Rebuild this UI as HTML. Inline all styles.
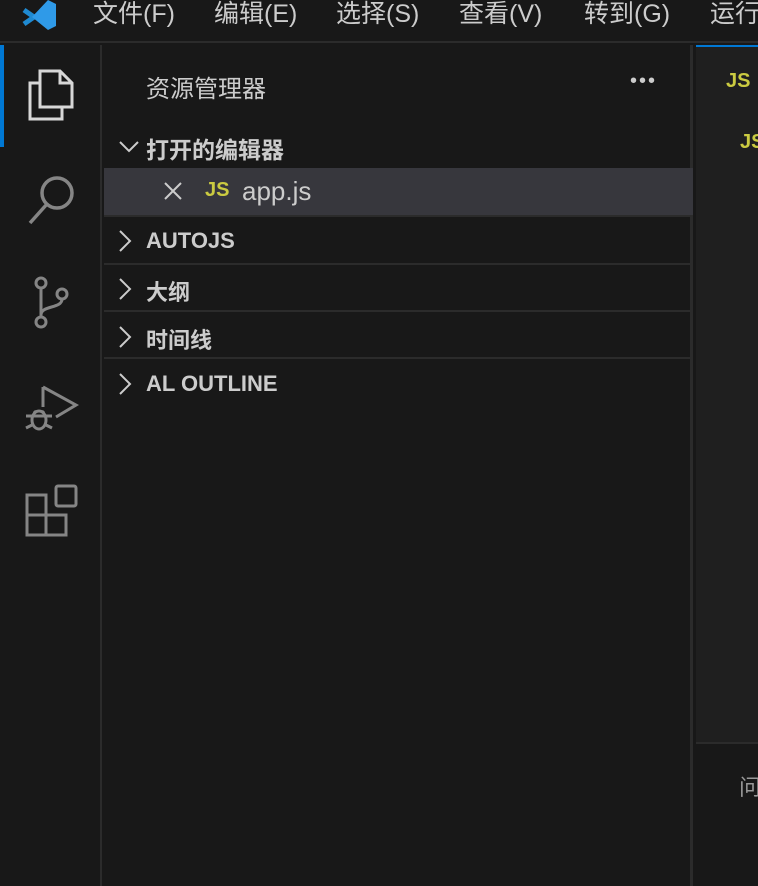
<!DOCTYPE html>
<html><head><meta charset="utf-8"><style>
*{margin:0;padding:0;box-sizing:border-box}
body{width:758px;height:886px;background:#181818;overflow:hidden;position:relative;font-family:"Liberation Sans","Noto Sans CJK SC",sans-serif;color:#ccc}
.a{position:absolute;white-space:nowrap}
.menu{top:0;left:0;width:758px;height:43px;background:#181818;border-bottom:2px solid #2b2b2b;overflow:hidden}
.menu span{position:absolute;top:-1px;font-size:25px;color:#ccc;line-height:30px;white-space:nowrap}
.act{top:45px;left:0;width:102px;height:841px;background:#181818;border-right:2px solid #2b2b2b}
.side{top:45px;left:104px;width:589px;height:841px;background:#181818;border-right:3px solid #2b2b2b}
.row{position:absolute;left:0;width:589px;font-weight:bold;font-size:22px;color:#ccc}
.chev{position:absolute;left:14px}
.sep{position:absolute;left:0;width:589px;height:2px;background:#2b2b2b}
</style></head><body>
<div class="a menu">
<svg class="a" style="left:20px;top:0" width="38" height="30" viewBox="0 0 38 30"><path d="M4 10 L14 17 L4 24" stroke="#1f8ad2" stroke-width="5" fill="none"/><path d="M28 0 L36 4 V26 L28 30 L12 17 Z" fill="#2f9ae8"/></svg>
<span style="left:93px">文件(F)</span><span style="left:214px">编辑(E)</span><span style="left:336px">选择(S)</span><span style="left:459px">查看(V)</span><span style="left:584px">转到(G)</span><span style="left:710px">运行</span>
</div>
<div class="a act">
<div class="a" style="left:0;top:0;width:4px;height:102px;background:#0078d4"></div>
<svg class="a" style="left:26px;top:24px" width="50" height="52" viewBox="0 0 50 52" fill="none" stroke="#d7d7d7" stroke-width="3"><path d="M34 2 H14 V38 H46 V14 Z M34 2 V14 H46"/><path d="M14 14 H4 V50 H36 V38"/></svg>
<svg class="a" style="left:26px;top:128px" width="52" height="54" viewBox="0 0 52 54" fill="none" stroke="#858585" stroke-width="3.5"><circle cx="31" cy="20" r="15"/><path d="M21 31 L4 50"/></svg>
<svg class="a" style="left:30px;top:230px" width="44" height="56" viewBox="0 0 44 56" fill="none" stroke="#858585" stroke-width="3"><circle cx="11" cy="8" r="5"/><circle cx="11" cy="47" r="5"/><circle cx="32" cy="19" r="5"/><path d="M11 13 V42 M32 24 C32 34 11 30 11 40"/></svg>
<svg class="a" style="left:24px;top:330px" width="56" height="60" viewBox="0 0 56 60" fill="none" stroke="#858585" stroke-width="3"><path d="M19 12 V32 M19 12 L52 30 L32 42"/><ellipse cx="15" cy="45" rx="7" ry="9"/><path d="M2 41 H28 M2 53 L8 50 M28 53 L22 50 M10 36 L12 38 M20 36 L18 38"/></svg>
<svg class="a" style="left:24px;top:438px" width="56" height="56" viewBox="0 0 56 56" fill="none" stroke="#858585" stroke-width="3"><rect x="32" y="3" width="20" height="20" rx="2"/><path d="M3 12 H22 V52 H3 Z M3 32 H42 V52 H22"/></svg>
</div>
<div class="a side">
<div class="a" style="left:42px;top:24px;font-size:24px;color:#ccc">资源管理器</div>
<div class="a" style="left:526px;top:25px;font-size:20px;color:#ccc;letter-spacing:2px">•••</div>
<div class="row" style="top:86px;height:36px"><svg class="chev" style="top:9px" width="22" height="14" viewBox="0 0 22 14"><path d="M2 2 L11 11 L20 2" stroke="#ccc" stroke-width="2" fill="none"/></svg><span class="a" style="left:42px;top:0px;font-size:23px">打开的编辑器</span></div>
<div class="a" style="left:0;top:123px;width:589px;height:47px;background:#37373d"></div>
<svg class="a" style="left:60px;top:137px" width="18" height="18" viewBox="0 0 18 18"><path d="M1 1 L17 17 M17 1 L1 17" stroke="#ccc" stroke-width="2"/></svg>
<div class="a" style="left:101px;top:134px;font-size:20px;font-weight:bold;color:#cbcb41">JS</div>
<div class="a" style="left:138px;top:131px;font-size:26px;color:#ccc">app.js</div>
<div class="sep" style="top:170px"></div>
<div class="row" style="top:182px"><svg class="chev" style="top:2px" width="14" height="24" viewBox="0 0 14 24"><path d="M2 2 L12 12 L2 22" stroke="#ccc" stroke-width="2" fill="none"/></svg><span class="a" style="left:42px;top:1px">AUTOJS</span></div>
<div class="sep" style="top:218px"></div>
<div class="row" style="top:230px"><svg class="chev" style="top:2px" width="14" height="24" viewBox="0 0 14 24"><path d="M2 2 L12 12 L2 22" stroke="#ccc" stroke-width="2" fill="none"/></svg><span class="a" style="left:42px;top:0px">大纲</span></div>
<div class="sep" style="top:265px"></div>
<div class="row" style="top:278px"><svg class="chev" style="top:2px" width="14" height="24" viewBox="0 0 14 24"><path d="M2 2 L12 12 L2 22" stroke="#ccc" stroke-width="2" fill="none"/></svg><span class="a" style="left:42px;top:0px">时间线</span></div>
<div class="sep" style="top:312px"></div>
<div class="row" style="top:325px"><svg class="chev" style="top:2px" width="14" height="24" viewBox="0 0 14 24"><path d="M2 2 L12 12 L2 22" stroke="#ccc" stroke-width="2" fill="none"/></svg><span class="a" style="left:42px;top:1px">AL OUTLINE</span></div>
</div>
<div class="a" style="left:696px;top:45px;width:62px;height:697px;background:#1f1f1f"></div>
<div class="a" style="left:696px;top:45px;width:62px;height:2px;background:#0078d4"></div>
<div class="a" style="left:726px;top:70px;font-size:20px;font-weight:bold;color:#cbcb41">JS</div>
<div class="a" style="left:740px;top:131px;font-size:20px;font-weight:bold;color:#cbcb41">JS</div>
<div class="a" style="left:696px;top:742px;width:62px;height:2px;background:#2b2b2b"></div>
<div class="a" style="left:696px;top:744px;width:62px;height:142px;background:#181818"></div>
<div class="a" style="left:739px;top:770px;font-size:22px;color:#999">问</div>
</body></html>
